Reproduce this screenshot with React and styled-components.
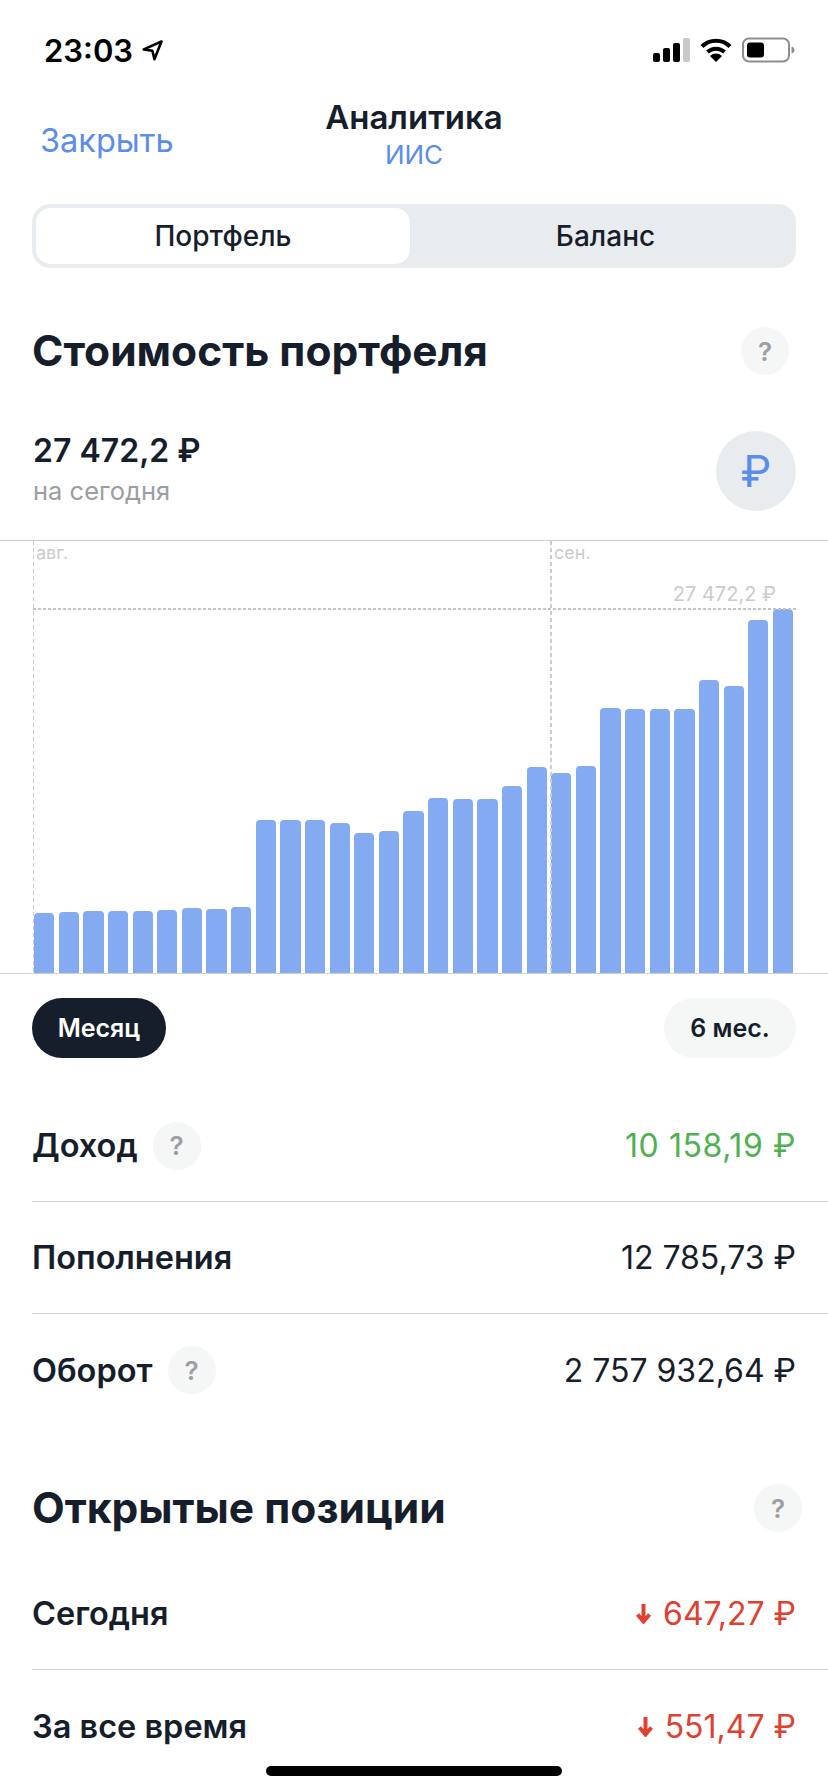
import React from "react";
import styled, { createGlobalStyle } from "styled-components";

const GlobalStyle = createGlobalStyle`
  html, body {
    margin: 0;
    padding: 0;
    background: #fff;
  }
  * {
    box-sizing: border-box;
  }
`;

const BAR_TOPS = [
  913, 912, 911, 911, 911, 910, 908, 909, 907, 820, 820, 820, 823, 833, 831, 811,
  798, 799, 799, 786, 767, 773, 766, 708, 709, 709, 709, 680, 686, 620, 609,
];
const CHART_BOTTOM = 973;

const Screen = styled.div`
  position: relative;
  width: 828px;
  height: 1792px;
  overflow: hidden;
  background: #fff;
  color: #161e2b;
  font-family: Inter, "Noto Sans", sans-serif;
`;
const StatusBar = styled.div`
  display: flex;
  justify-content: space-between;
  align-items: center;
  height: 90px;
  padding: 10px 33px 0 44px;
`;
const TimeGroup = styled.div`
  display: flex;
  align-items: center;
  gap: 9px;
  color: #000;
  font-size: 31px;
  font-weight: 600;
`;
const StatusIcons = styled.div`
  display: flex;
  align-items: center;
  gap: 10px;
`;
const NavBar = styled.div`
  display: grid;
  grid-template-columns: 1fr auto 1fr;
  height: 114px;
  padding: 0 32px;
`;
const CloseLink = styled.div`
  padding: 31px 0 0 8px;
  color: #5b8dea;
  font-size: 32.5px;
  line-height: 40px;
`;
const NavTitle = styled.div`
  display: flex;
  flex-direction: column;
  align-items: center;
  padding-top: 7px;
`;
const TitleText = styled.div`
  font-size: 33px;
  font-weight: 600;
  line-height: 40px;
`;
const SubtitleText = styled.div`
  color: #5b8dea;
  font-size: 26px;
  line-height: 36px;
`;
const Segment = styled.div`
  display: grid;
  grid-template-columns: 374px 1fr;
  align-items: center;
  height: 64px;
  margin: 0 32px;
  padding: 4px 0 4px 4px;
  border-radius: 18px;
  background: #e9ecee;
`;
const SegmentItem = styled.div`
  display: flex;
  align-items: center;
  justify-content: center;
  height: 56px;
  padding-left: ${(props) => (props.$active ? 0 : 5)}px;
  border-radius: 15px;
  background: ${(props) => (props.$active ? "#fff" : "transparent")};
  font-size: 28px;
  font-weight: 500;
`;
const SectionHead = styled.div`
  display: flex;
  justify-content: space-between;
  align-items: center;
  height: 48px;
  margin-top: ${(props) => props.$top}px;
  padding: 0 32px;
`;
const SectionTitle = styled.h2`
  margin: 0;
  font-size: 42.5px;
  font-weight: 700;
  line-height: 48px;
`;
const Help = styled.div`
  display: flex;
  align-items: center;
  justify-content: center;
  flex: none;
  width: 48px;
  height: 48px;
  margin-right: ${(props) => props.$shift || 0}px;
  border-radius: 50%;
  background: #f5f6f6;
  color: #9c9fa3;
  font-size: 26px;
  font-weight: 600;
`;
const Summary = styled.div`
  display: flex;
  justify-content: space-between;
  align-items: center;
  height: 80px;
  margin-top: 56px;
  padding: 0 32px 0 33px;
`;
const SummaryValue = styled.div`
  font-size: 32px;
  font-weight: 600;
  line-height: 38px;
`;
const SummaryNote = styled.div`
  margin-top: 2px;
  color: #9a9ea2;
  font-size: 25.5px;
  line-height: 38px;
`;
const CurrencyButton = styled.div`
  display: flex;
  align-items: center;
  justify-content: center;
  width: 80px;
  height: 80px;
  border-radius: 50%;
  background: #e9ecee;
  color: #5b8dea;
  font-size: 44px;
  font-weight: 400;
`;
const Chart = styled.div`
  position: relative;
  display: flex;
  align-items: flex-end;
  gap: 4.33px;
  height: 434px;
  margin-top: 29px;
  padding-left: 34px;
  border-top: 1px solid #d0d0d0;
  border-bottom: 1px solid #d0d0d0;
`;
const Bar = styled.div`
  flex: none;
  width: 20.3px;
  border-radius: 4px 4px 0 0;
  background: #84aaf2;
`;
const VerticalGuide = styled.div`
  position: absolute;
  top: 0;
  bottom: 0;
  left: ${(props) => props.$left}px;
  width: ${(props) => props.$width}px;
  background: repeating-linear-gradient(to bottom, #cdcdcd 0 4px, transparent 4px 7px);
`;
const HorizontalGuide = styled.div`
  position: absolute;
  top: 67px;
  left: 33px;
  width: 763px;
  height: 2px;
  background: repeating-linear-gradient(to right, #c4c4c4 0 3px, transparent 3px 5px);
`;
const MonthLabel = styled.div`
  position: absolute;
  top: 0;
  left: ${(props) => props.$left}px;
  color: #cbcbcb;
  font-size: 18px;
  line-height: 24px;
`;
const MaxLabel = styled.div`
  position: absolute;
  top: 40px;
  right: 52px;
  color: #cbcbcb;
  font-size: 20px;
  line-height: 26px;
`;
const Periods = styled.div`
  display: flex;
  justify-content: space-between;
  margin-top: 24px;
  padding: 0 32px;
`;
const Pill = styled.div`
  display: flex;
  align-items: center;
  justify-content: center;
  width: ${(props) => props.$width}px;
  height: 60px;
  border-radius: 30px;
  background: ${(props) => (props.$active ? "#161e2b" : "#f5f7f7")};
  color: ${(props) => (props.$active ? "#fff" : "#161e2b")};
  font-size: 25px;
  font-weight: 600;
`;
const RowList = styled.div`
  margin-top: ${(props) => props.$top}px;
  padding-left: 32px;
`;
const Row = styled.div`
  display: flex;
  justify-content: space-between;
  align-items: center;
  height: 112px;
  padding-right: 32px;
  border-bottom: 1px solid #d0d0d0;
  &:last-child {
    border-bottom: none;
  }
`;
const RowLabel = styled.div`
  display: flex;
  align-items: center;
  gap: 15px;
  font-size: 32.5px;
  font-weight: 600;
`;
const RowValue = styled.div`
  display: flex;
  align-items: center;
  gap: 11px;
  color: ${(props) => props.$color || "#161e2b"};
  font-size: 32px;
  letter-spacing: ${(props) => props.$spacing || 0}px;
`;
const HomeIndicator = styled.div`
  position: absolute;
  bottom: 16px;
  left: 266px;
  width: 296px;
  height: 10px;
  border-radius: 5px;
  background: #000;
`;

const LocationIcon = () => (
  <svg width="21" height="21" viewBox="0 0 21 21" fill="none">
    <path d="M19.5 1.5 1.8 9.4l8.6 1.4 2 8.4z" stroke="#000" strokeWidth="2.6" strokeLinejoin="round" />
  </svg>
);

const SignalIcon = () => (
  <svg width="37" height="24" viewBox="0 0 37 24">
    <rect x="0" y="15" width="7" height="9" rx="2" fill="#000" />
    <rect x="10" y="10" width="7" height="14" rx="2" fill="#000" />
    <rect x="20" y="5" width="7" height="19" rx="2" fill="#000" />
    <rect x="30" y="0" width="7" height="24" rx="2" fill="#c9c9c9" />
  </svg>
);

const WifiIcon = () => (
  <svg width="32" height="24" viewBox="0 0 32 24" fill="none">
    <path d="M2 8.5a20 20 0 0 1 28 0" stroke="#000" strokeWidth="4" />
    <path d="M7.5 14a12.5 12.5 0 0 1 17 0" stroke="#000" strokeWidth="4" />
    <path d="M16 24l-6-6a8.5 8.5 0 0 1 12 0z" fill="#000" />
  </svg>
);

const BatteryIcon = () => (
  <svg width="53" height="26" viewBox="0 0 53 26">
    <rect x="1" y="1.5" width="46" height="23" rx="6" fill="none" stroke="#8d8d8d" strokeWidth="2" />
    <rect x="5" y="5.5" width="17" height="15" rx="3" fill="#000" />
    <path d="M49.5 9.5c2 .5 3 2 3 3.5s-1 3-3 3.5z" fill="#8d8d8d" />
  </svg>
);

const DownArrow = ({ color }) => (
  <svg width="17" height="21" viewBox="0 0 17 21" fill="none">
    <path d="M8.5 1v17M2.5 11.5l6 7 6-7" stroke={color} strokeWidth="4" />
  </svg>
);

const RED = "#e0402f";

const App = () => {
  return (
    <Screen>
      <GlobalStyle />
      <StatusBar>
        <TimeGroup>
          23:03
          <LocationIcon />
        </TimeGroup>
        <StatusIcons>
          <SignalIcon />
          <WifiIcon />
          <BatteryIcon />
        </StatusIcons>
      </StatusBar>

      <NavBar>
        <CloseLink>Закрыть</CloseLink>
        <NavTitle>
          <TitleText>Аналитика</TitleText>
          <SubtitleText>ИИС</SubtitleText>
        </NavTitle>
      </NavBar>

      <Segment>
        <SegmentItem $active>Портфель</SegmentItem>
        <SegmentItem>Баланс</SegmentItem>
      </Segment>

      <SectionHead $top={59}>
        <SectionTitle>Стоимость портфеля</SectionTitle>
        <Help $shift={7}>?</Help>
      </SectionHead>

      <Summary>
        <div>
          <SummaryValue>27 472,2 ₽</SummaryValue>
          <SummaryNote>на сегодня</SummaryNote>
        </div>
        <CurrencyButton>₽</CurrencyButton>
      </Summary>

      <Chart>
        {BAR_TOPS.map((top, i) => (
          <Bar key={i} style={{ height: CHART_BOTTOM - top }} />
        ))}
        <VerticalGuide $left={33} $width={1} />
        <VerticalGuide $left={550} $width={2} />
        <HorizontalGuide />
        <MonthLabel $left={36}>авг.</MonthLabel>
        <MonthLabel $left={554}>сен.</MonthLabel>
        <MaxLabel>27 472,2 ₽</MaxLabel>
      </Chart>

      <Periods>
        <Pill $active $width={134}>Месяц</Pill>
        <Pill $width={132}>6 мес.</Pill>
      </Periods>

      <RowList $top={32}>
        <Row>
          <RowLabel>
            Доход
            <Help>?</Help>
          </RowLabel>
          <RowValue $color="#4fb04f" $spacing={0.6}>10 158,19 ₽</RowValue>
        </Row>
        <Row>
          <RowLabel>Пополнения</RowLabel>
          <RowValue>12 785,73 ₽</RowValue>
        </Row>
        <Row>
          <RowLabel>
            Оборот
            <Help>?</Help>
          </RowLabel>
          <RowValue>2 757 932,64 ₽</RowValue>
        </Row>
      </RowList>

      <SectionHead $top={58}>
        <SectionTitle>Открытые позиции</SectionTitle>
        <Help $shift={-6}>?</Help>
      </SectionHead>

      <RowList $top={26}>
        <Row>
          <RowLabel>Сегодня</RowLabel>
          <RowValue $color={RED}>
            <DownArrow color={RED} />
            647,27 ₽
          </RowValue>
        </Row>
        <Row>
          <RowLabel>За все время</RowLabel>
          <RowValue $color={RED}>
            <DownArrow color={RED} />
            551,47 ₽
          </RowValue>
        </Row>
      </RowList>

      <HomeIndicator />
    </Screen>
  );
};

export default App;
